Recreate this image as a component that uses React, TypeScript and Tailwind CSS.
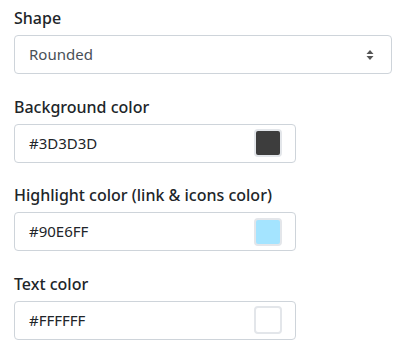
import React from "react";

const font = { fontFamily: '"Noto Sans", "Open Sans", sans-serif' };

function Label({ children }: { children: React.ReactNode }) {
  return (
    <div className="text-[16px] font-medium leading-[22px] text-[#212529] mb-[6px]">{children}</div>
  );
}

function ColorField({ label, value, color }: { label: string; value: string; color: string }) {
  return (
    <div className="mt-[21.5px]">
      <Label>{label}</Label>
      <div className="flex h-[39px] w-[282px] items-center justify-between rounded-[4px] border border-[#ced4da] bg-white pl-[14px] pr-[13px]">
        <span className="text-[15px] text-[#212529]">{value}</span>
        <span
          className="block h-[28px] w-[28px] rounded-[4px] border-2 border-[#e3e6ea]"
          style={{ backgroundColor: color }}
        />
      </div>
    </div>
  );
}

export default function App() {
  return (
    <div className="min-h-[350px] w-[402px] bg-white px-[14px] pt-[7px]" style={font}>
      <div>
        <Label>Shape</Label>
        <div className="flex h-[39px] w-[378px] items-center justify-between rounded-[4px] border border-[#ced4da] bg-white pl-[14px] pr-[17px]">
          <span className="text-[15px] text-[#495057]">Rounded</span>
          <svg width="8" height="12" viewBox="0 0 8 12">
            <path d="M4 1 L7.5 5 H0.5 Z" fill="#555" />
            <path d="M4 11 L7.5 7 H0.5 Z" fill="#555" />
          </svg>
        </div>
      </div>
      <ColorField label="Background color" value="#3D3D3D" color="#3D3D3D" />
      <ColorField label="Highlight color (link & icons color)" value="#90E6FF" color="#A4E4FF" />
      <ColorField label="Text color" value="#FFFFFF" color="#FFFFFF" />
    </div>
  );
}
